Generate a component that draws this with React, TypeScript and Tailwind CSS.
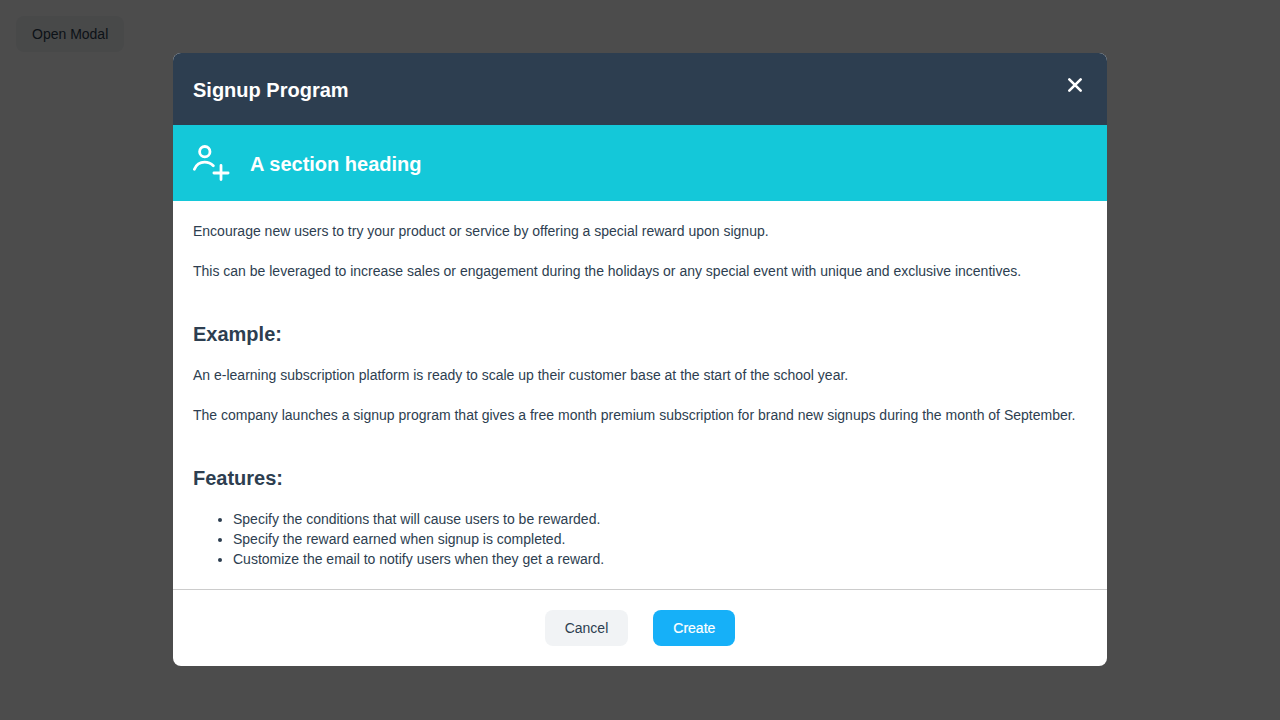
import { useState } from "react";

const features = [
  "Specify the conditions that will cause users to be rewarded.",
  "Specify the reward earned when signup is completed.",
  "Customize the email to notify users when they get a reward.",
];

function CloseIcon() {
  return (
    <svg className="size-6" viewBox="0 0 24 24" fill="none" stroke="currentColor" strokeWidth="2.6" strokeLinecap="round" aria-hidden="true">
      <path d="M6.3 6.3 17.7 17.7M17.7 6.3 6.3 17.7" />
    </svg>
  );
}

function UserPlusIcon() {
  return (
    <svg className="h-9 w-[37px] shrink-0" viewBox="0 0 37 36" fill="none" stroke="currentColor" strokeWidth="2.8" strokeLinecap="round" aria-hidden="true">
      <circle cx="11.8" cy="6.7" r="5.2" />
      <path d="M1.4 24.2C3.2 19.8 7 17.1 11.6 17.1c3.4 0 6.4 1.300 8.700 3.600" />
      <path d="M28 20.500v14.100M20.900 28h14.200" />
    </svg>
  );
}

function Modal({ onClose }: { onClose: () => void }) {
  return (
    <div className="fixed inset-0 flex items-center justify-center overflow-auto bg-black/70 pb-px">
      <div role="dialog" aria-modal="true" aria-labelledby="modal-title" className="w-full max-w-[934px] overflow-hidden rounded-lg bg-white">
        <header className="flex items-start justify-between bg-[#2d3e50] p-5 text-white">
          <h1 id="modal-title" className="pt-0.5 text-xl/[30px] font-bold">Signup Program</h1>
          <button type="button" aria-label="Close" onClick={onClose} className="cursor-pointer">
            <CloseIcon />
          </button>
        </header>
        <div className="flex items-center gap-5 bg-[#14c8d9] p-5 text-white">
          <UserPlusIcon />
          <h2 className="pt-0.5 text-xl/[30px] font-bold">A section heading</h2>
        </div>
        <div className="flex flex-col gap-5 p-5">
          <p>Encourage new users to try your product or service by offering a special reward upon signup.</p>
          <p>
            This can be leveraged to increase sales or engagement during the holidays or any special event with unique
            and exclusive incentives.
          </p>
          <h3 className="pt-[22px] text-xl/[22px] font-bold">Example:</h3>
          <p>An e-learning subscription platform is ready to scale up their customer base at the start of the school year.</p>
          <p>
            The company launches a signup program that gives a free month premium subscription for brand new signups
            during the month of September.
          </p>
          <h3 className="pt-[22px] text-xl/[22px] font-bold">Features:</h3>
          <ul className="list-disc pl-10">
            {features.map((feature) => (
              <li key={feature}>{feature}</li>
            ))}
          </ul>
        </div>
        <footer className="flex justify-center gap-[25px] border-t border-[#cccccc] p-5">
          <button type="button" onClick={onClose} className="cursor-pointer rounded-lg bg-[#f1f3f5] px-5 py-2">
            Cancel
          </button>
          <button type="button" className="cursor-pointer rounded-lg bg-[#16b0f8] px-5 py-2 text-white [-webkit-text-stroke:0.2px_white]">
            Create
          </button>
        </footer>
      </div>
    </div>
  );
}

export default function App() {
  const [open, setOpen] = useState(true);

  return (
    <main className="min-h-screen bg-white p-4 font-['Liberation_Sans',Arial,sans-serif] text-sm/5 text-[#2d3e50]">
      <button type="button" onClick={() => setOpen(true)} className="cursor-pointer rounded-lg bg-[#f1f3f5] px-4 py-2">
        Open Modal
      </button>
      {open && <Modal onClose={() => setOpen(false)} />}
    </main>
  );
}
